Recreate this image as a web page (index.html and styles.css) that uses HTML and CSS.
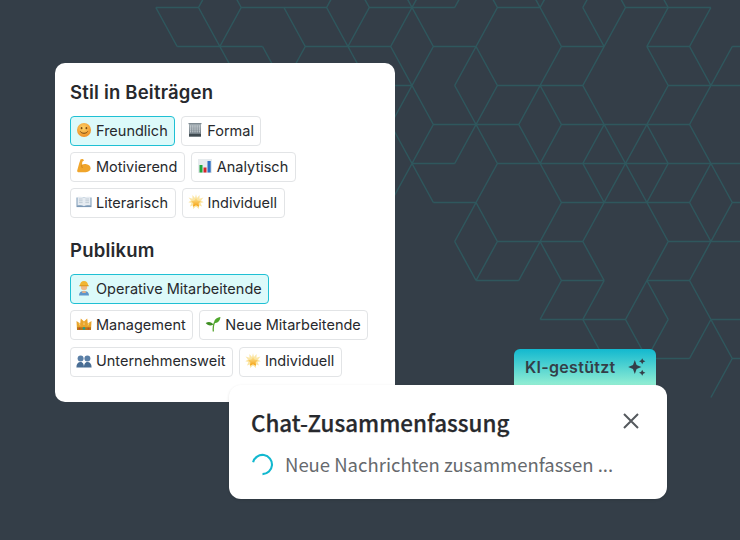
FILE: index.html
```html
<!DOCTYPE html>
<html lang="de">
<head>
<meta charset="utf-8">
<title>Chat-Zusammenfassung</title>
<link rel="stylesheet" href="styles.css">
</head>
<body>
<svg class="defs" aria-hidden="true">
  <defs>
    <radialGradient id="gSmile" cx="45%" cy="35%" r="70%"><stop offset="0" stop-color="#fdd36a"/><stop offset="1" stop-color="#ee8a1e"/></radialGradient>
    <linearGradient id="gStar" x1="0" y1="0" x2="0" y2="1"><stop offset="0" stop-color="#fdeaa0"/><stop offset="1" stop-color="#f59e0b"/></linearGradient>
    <linearGradient id="gBuild" x1="0" y1="0" x2="0" y2="1"><stop offset="0" stop-color="#a9b2b8"/><stop offset="1" stop-color="#66727a"/></linearGradient>
    <symbol id="e-smile" viewBox="0 0 16 16"><circle cx="8" cy="8" r="7" fill="url(#gSmile)"/><ellipse cx="5.6" cy="6.2" rx=".9" ry="1.1" fill="#7a4a12"/><ellipse cx="10.4" cy="6.2" rx=".9" ry="1.1" fill="#7a4a12"/><path d="M4.3 9.4c1 2.5 6.4 2.5 7.4 0" fill="none" stroke="#7a4a12" stroke-width="1"/></symbol>
    <symbol id="e-build" viewBox="0 0 16 16"><rect x="2" y="1.5" width="12" height="13" fill="url(#gBuild)"/><rect x="1.5" y="1" width="13" height="1.2" fill="#7f8a91"/><path d="M3.6 3.5v7.5M5.8 3.5v7.5M8 3.5v7.5M10.2 3.5v7.5M12.4 3.5v7.5" stroke="#d7dde0" stroke-width="1" stroke-dasharray="1.2 .7"/><rect x="2" y="12" width="12" height="2.5" fill="#3f4a50"/></symbol>
    <symbol id="e-arm" viewBox="0 0 16 16"><path d="M4.6 1.3 7 .9 8 2.5 6.3 3.8 6 6.8C7.3 5.9 9 5.7 10.6 6.2 12.6 6.6 14.6 8 14.6 10.2 14.6 12.8 11.6 14.2 8.5 14.2H2.2C1.4 14.2 1 13.4 1.2 12.6L3.2 5.2Z" fill="#f0a52b"/><path d="M6 6.8C5.6 8 5.7 9.2 6.6 10" fill="none" stroke="#c97c14" stroke-width=".8"/></symbol>
    <symbol id="e-chart" viewBox="0 0 16 16"><rect x="1" y="1" width="14" height="14" fill="#e6ebee"/><rect x="2.5" y="7" width="3" height="7.5" fill="#1fa83c"/><rect x="6.5" y="9.5" width="3" height="5" fill="#d8232a"/><rect x="10.5" y="3" width="3.2" height="11.5" fill="#2f6fc4"/></symbol>
    <symbol id="e-book" viewBox="0 0 16 16"><path d="M.5 3.5h15v9.6H.5Z" fill="#7b98b5"/><path d="M1.5 3c2.5-.6 5 0 6.5.8V12.3C6.5 11.5 4 11 1.5 11.6ZM14.5 3C12 2.4 9.5 3 8 3.8V12.3C9.5 11.5 12 11 14.5 11.6Z" fill="#e6ecf2"/><path d="M3 5h3.6M3 6.8h3.6M3 8.6h3.6M9.4 5H13M9.4 6.8H13M9.4 8.6H13" stroke="#b2c0cc" stroke-width=".7"/></symbol>
    <symbol id="e-star" viewBox="0 0 16 16"><path d="M8 .3 9 4 11.6 .9 11.5 4.8 15.5 3.6 13 6.6 15.7 8.2 12.6 9 14 12.6 11 11.4 11 15 8 12.6 5 15 5 11.4 2 12.6 3.4 9 .3 8.2 3 6.6 .5 3.6 4.5 4.8 4.4 .9 7 4Z" fill="#fbe6a6"/><path d="M8 3.4 9.6 6.6 13 7.1 10.6 9.5 11.1 12.8 8 11.2 4.9 12.8 5.4 9.5 3 7.1 6.4 6.6Z" fill="url(#gStar)"/></symbol>
    <symbol id="e-worker" viewBox="0 0 16 16"><path d="M3 15.5c0-3.2 2-4.6 5-4.6s5 1.4 5 4.6Z" fill="#5f95c9"/><path d="M6.2 11h3.6v2H6.2Z" fill="#e3b088"/><circle cx="8" cy="7" r="3.2" fill="#efbb8a"/><path d="M3.8 5.9C3.8 3 5.6 1 8 1s4.2 2 4.2 4.9Z" fill="#f2b632"/><rect x="3.2" y="5.2" width="9.6" height="1.1" rx=".5" fill="#d9971c"/></symbol>
    <symbol id="e-crown" viewBox="0 0 16 16"><path d="M1 14 .5 5 4.2 7.6 4.8 2.6 8 5.4 11.2 2.6 11.8 7.6 15.5 5 15 14Z" fill="#e9a42c"/><path d="M1 11.2h14V14H1Z" fill="#b9761a"/><circle cx="8" cy="12.4" r="1.3" fill="#1f9f8f"/><circle cx="3.6" cy="12.6" r=".8" fill="#c8402c"/><circle cx="12.4" cy="12.6" r=".8" fill="#c8402c"/><path d="M4 9.5 3 6.8M12 9.5l1-2.7M8 9V6.5" stroke="#f8d479" stroke-width="1"/></symbol>
    <symbol id="e-seed" viewBox="0 0 16 16"><path d="M8.3 15.5C8 11 8.3 8.6 9.6 6.2" fill="none" stroke="#56a52d" stroke-width="1.3"/><path d="M9 7.2C9 3.6 11.6 1.4 15.4 1 15.3 4.6 12.8 7.2 9 7.2Z" fill="#4fa72c"/><path d="M8.4 8.6C6.6 6 3.8 5.4.7 7 2.5 9.6 5.4 10.2 8.4 8.6Z" fill="#3f8f23"/></symbol>
    <symbol id="e-people" viewBox="0 0 16 16"><circle cx="4.6" cy="5.4" r="3" fill="#5a7fa6"/><circle cx="11.4" cy="5.4" r="3" fill="#5a7fa6"/><path d="M.4 14.4c0-3.5 1.6-5.4 4.2-5.4 1.8 0 3.4 1.6 3.4 5.4ZM8 14.4c0-3.8 1.6-5.4 3.4-5.4 2.6 0 4.2 1.9 4.2 5.4Z" fill="#486d94"/></symbol>
  </defs>
</svg>

<main class="stage">
  <svg class="pattern" width="740" height="540" aria-hidden="true">
    <g transform="translate(155.8 7.5) scale(21.35 39)">
      <path class="pattern-line" d="M0 0H2M4 0H8M10 0H14M16 0H18M22 0H26
        M3-1 2 0M3-1 4 0M9-1 8 0M9-1 10 0M11-1 12 0M13-1 12 0M15-1 14 0M15-1 16 0M17-1 18 0M19-1 18 0M21-1 20 0M21-1 22 0M23-1 24 0
        M0 0 1 1M2 0 3 1M4 0 3 1M6 0 7 1M8 0 9 1M10 0 9 1M12 0 11 1M12 0 13 1M16 0 15 1M18 0 19 1M22 0 21 1M20 0 21 1M24 0 23 1M26 0 25 1
        M1 1H5M7 1H11M13 1H15M19 1H21M23 1H25M27 1H29
        M3 1 4 2M5 1 6 2M7 1 6 2M9 1 10 2M11 1 12 2M13 1 12 2M15 1 16 2M15 1 14 2M19 1 18 2M21 1 20 2M23 1 24 2M25 1 26 2M27 1 26 2
        M10 2H12M16 2H20M24 2H30
        M12 2 11 3M12 2 13 3M14 2 15 3M16 2 15 3M18 2 17 3M18 2 19 3M20 2 21 3M24 2 23 3M26 2 25 3
        M13 3H17M19 3H25
        M13 3 12 4M15 3 14 4M15 3 16 4M17 3 18 4M19 3 18 4M21 3 20 4M21 3 22 4M23 3 22 4M23 3 24 4M25 3 26 4M11 3 12 4
        M12 4H14M16 4H30
        M12 4 13 5M12 4 11 5M16 4 15 5M18 4 19 5M20 4 21 5M22 4 21 5M22 4 23 5M24 4 23 5M26 4 25 5M26 4 27 5
        M13 5H15M19 5H25M27 5H29
        M15 5 14 6M15 5 16 6M19 5 18 6M21 5 20 6M23 5 24 6M25 5 26 6M27 5 26 6
        M16 6H20M24 6H30
        M14 6 15 7M16 6 15 7M18 6 17 7M18 6 19 7M20 6 21 7M24 6 23 7M26 6 25 7
        M15 7H17M19 7H21M23 7H25
        M19 7 18 8M21 7 20 8M23 7 22 8M23 7 24 8M25 7 26 8
        M18 8H22M26 8H30
        M20 8 21 9M22 8 23 9M24 8 23 9M26 8 25 9M26 8 27 9
        M23 9H25M27 9H30
        M27 9 26 10"/>
    </g>
  </svg>

  <section class="card">
    <h2 class="card-title">Stil in Beiträgen</h2>
    <div class="chips">
      <div class="chip-row">
        <span class="chip chip-on"><svg class="emoji"><use href="#e-smile"/></svg>Freundlich</span>
        <span class="chip"><svg class="emoji"><use href="#e-build"/></svg>Formal</span>
      </div>
      <div class="chip-row">
        <span class="chip"><svg class="emoji"><use href="#e-arm"/></svg>Motivierend</span>
        <span class="chip"><svg class="emoji"><use href="#e-chart"/></svg>Analytisch</span>
      </div>
      <div class="chip-row">
        <span class="chip"><svg class="emoji"><use href="#e-book"/></svg>Literarisch</span>
        <span class="chip"><svg class="emoji"><use href="#e-star"/></svg>Individuell</span>
      </div>
    </div>
    <h2 class="card-title card-title-next">Publikum</h2>
    <div class="chips chips-loose">
      <div class="chip-row">
        <span class="chip chip-on"><svg class="emoji"><use href="#e-worker"/></svg>Operative Mitarbeitende</span>
      </div>
      <div class="chip-row">
        <span class="chip"><svg class="emoji"><use href="#e-crown"/></svg>Management</span>
        <span class="chip"><svg class="emoji"><use href="#e-seed"/></svg>Neue Mitarbeitende</span>
      </div>
      <div class="chip-row">
        <span class="chip"><svg class="emoji"><use href="#e-people"/></svg>Unternehmensweit</span>
        <span class="chip"><svg class="emoji"><use href="#e-star"/></svg>Individuell</span>
      </div>
    </div>
  </section>

  <section class="summary">
    <div class="badge">
      <span>KI-gestützt</span>
      <svg class="sparkle" viewBox="0 0 18 18"><path d="M6.8 2 8.6 7.1 13.4 9 8.6 10.9 6.8 16 5 10.9.2 9 5 7.1Z"/><path d="M14.2 .2 15.2 2.2 17.4 3.2 15.2 4.2 14.2 6.2 13.2 4.2 11 3.2 13.2 2.2Z"/><path d="M14.2 11.8 15.2 13.8 17.4 14.8 15.2 15.8 14.2 17.8 13.2 15.8 11 14.8 13.2 13.8Z"/></svg>
    </div>
    <div class="panel">
      <div class="panel-head">
        <h3 class="panel-title">Chat-Zusammenfassung</h3>
        <svg class="close" viewBox="0 0 18 18"><path d="M2 2 16 16M16 2 2 16"/></svg>
      </div>
      <div class="panel-status">
        <svg class="spinner" viewBox="0 0 24 24"><path d="M2.2 9.6A10 10 0 1 1 12 22"/></svg>
        <span>Neue Nachrichten zusammenfassen ...</span>
      </div>
    </div>
  </section>
</main>
</body>
</html>
```
FILE: styles.css
```css
html, body {
  margin: 0;
  padding: 0;
}

body {
  width: 740px;
  height: 540px;
  overflow: hidden;
  background: #343e48;
  font-family: "Inter", "Liberation Sans", sans-serif;
}

.defs {
  position: absolute;
  width: 0;
  height: 0;
}

.stage {
  position: relative;
  width: 740px;
  height: 540px;
  padding: 63px 0 0 55px;
  box-sizing: border-box;
  overflow: hidden;
}

.pattern {
  position: absolute;
  left: 0;
  top: 0;
}

.pattern-line {
  fill: none;
  stroke: #2f575d;
  stroke-width: 1.5px;
  vector-effect: non-scaling-stroke;
}

.card {
  position: relative;
  width: 340px;
  height: 339px;
  box-sizing: border-box;
  padding: 18px 14px 0 15px;
  background: #fff;
  border-radius: 10px;
}

.card-title {
  margin: 0 0 13px;
  font-size: 18.5px;
  line-height: 22px;
  font-weight: 600;
  letter-spacing: 0.2px;
  color: #27292d;
}

.card-title-next {
  margin-top: 21px;
}

.chips {
  display: flex;
  flex-direction: column;
  gap: 6px;
}

.chips-loose {
  gap: 6.4px;
}

.chip-row {
  display: flex;
  gap: 6px;
}

.chip {
  display: flex;
  align-items: center;
  gap: 4px;
  height: 30px;
  box-sizing: border-box;
  padding: 0 6.5px 2px 5px;
  border: 1px solid #e2e4e6;
  border-radius: 4px;
  font-size: 14.5px;
  color: #27292d;
  background: #fff;
}

.chip-on {
  background: #dcfafa;
  border-color: #1fc0d4;
}

.emoji {
  width: 16px;
  height: 16px;
  flex: none;
}

.summary {
  position: relative;
  width: 438px;
  margin: -53px 0 0 174px;
}

.badge {
  display: flex;
  align-items: center;
  justify-content: space-between;
  width: 142px;
  height: 41px;
  margin-left: 285px;
  padding: 0 10px 5px 11px;
  box-sizing: border-box;
  border-radius: 6px 6px 0 0;
  background: linear-gradient(180deg, #12b8cf 0%, #a5f6d4 100%);
  color: #343e48;
  font-size: 16px;
  font-weight: 600;
  letter-spacing: 0.3px;
}

.sparkle {
  width: 18px;
  height: 18px;
  fill: #343e48;
}

.panel {
  position: relative;
  height: 114px;
  margin-top: -5px;
  padding: 20px 27px 0 22px;
  box-sizing: border-box;
  background: #fff;
  border-radius: 12px;
  box-shadow: 0 1px 3px rgba(0, 0, 0, 0.12);
}

.panel-head {
  display: flex;
  align-items: center;
  justify-content: space-between;
}

.panel-title {
  margin: 0;
  font-family: "Noto Sans CJK SC", "Noto Sans", sans-serif;
  font-size: 22.4px;
  line-height: 34px;
  font-weight: 500;
  -webkit-text-stroke: 0.25px #27292d;
  color: #27292d;
}

.close {
  width: 18px;
  height: 18px;
  margin-bottom: 2px;
  fill: none;
  stroke: #55595e;
  stroke-width: 2;
}

.panel-status {
  display: flex;
  align-items: center;
  gap: 11px;
  margin-top: 10px;
  font-family: "Noto Sans CJK SC", "Noto Sans", sans-serif;
  font-size: 18.5px;
  line-height: 30px;
  color: #66696d;
}

.spinner {
  width: 23px;
  height: 23px;
  flex: none;
  fill: none;
  stroke: #12b8cf;
  stroke-width: 2.2;
}
```
